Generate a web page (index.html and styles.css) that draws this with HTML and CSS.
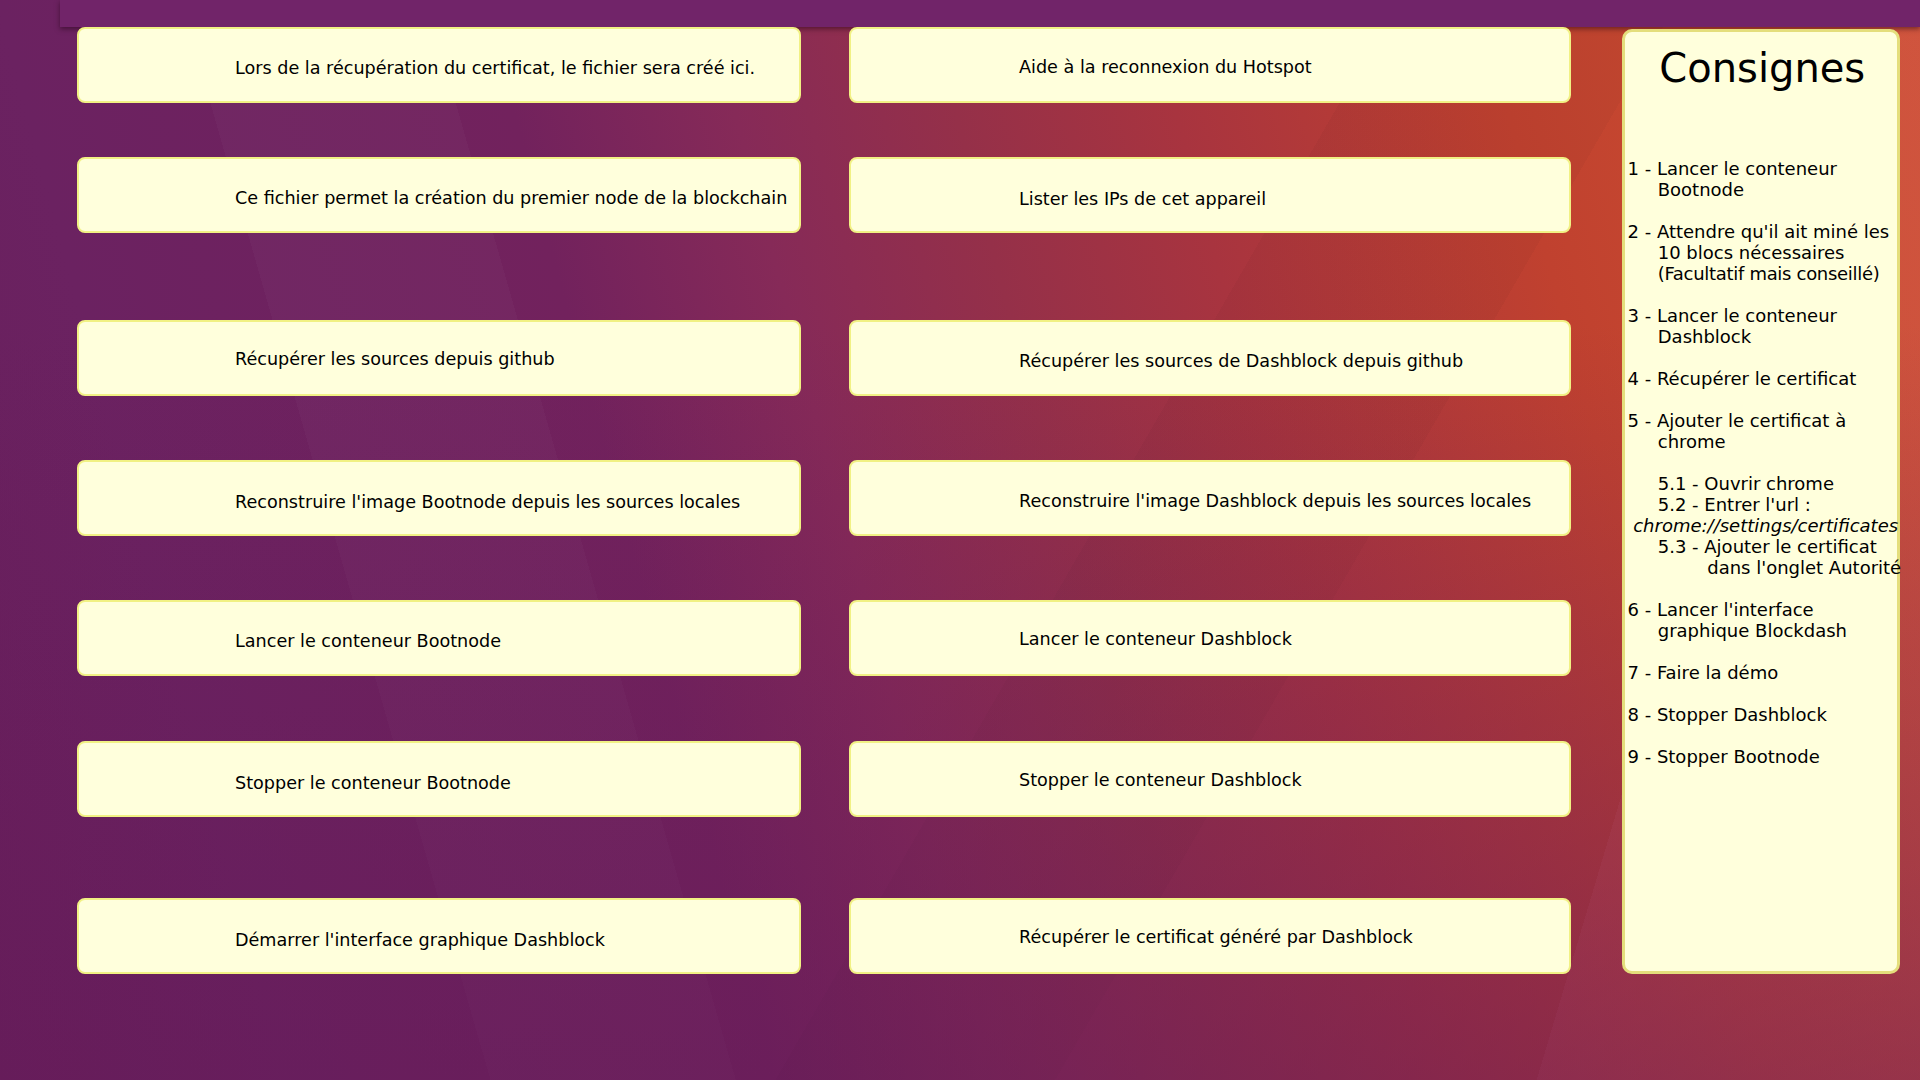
FILE: index.html
```html
<!DOCTYPE html>
<html lang="fr">
<head>
<meta charset="utf-8">
<title>Consignes</title>
<link rel="stylesheet" href="styles.css">
</head>
<body>
<div class="topbar"></div>
<main class="desk">
  <section class="board">
    <div class="row">
      <div class="card left">Lors de la récupération du certificat, le fichier sera créé ici.</div>
      <div class="card right up1">Aide à la reconnexion du Hotspot</div>
    </div>
    <div class="row">
      <div class="card left">Ce fichier permet la création du premier node de la blockchain</div>
      <div class="card right dn1">Lister les IPs de cet appareil</div>
    </div>
    <div class="row">
      <div class="card left up2">Récupérer les sources depuis github</div>
      <div class="card right">Récupérer les sources de Dashblock depuis github</div>
    </div>
    <div class="row">
      <div class="card left dn1">Reconstruire l'image Bootnode depuis les sources locales</div>
      <div class="card right">Reconstruire l'image Dashblock depuis les sources locales</div>
    </div>
    <div class="row">
      <div class="card left">Lancer le conteneur Bootnode</div>
      <div class="card right up2">Lancer le conteneur Dashblock</div>
    </div>
    <div class="row">
      <div class="card left dn1">Stopper le conteneur Bootnode</div>
      <div class="card right up2">Stopper le conteneur Dashblock</div>
    </div>
    <div class="row">
      <div class="card left dn1">Démarrer l'interface graphique Dashblock</div>
      <div class="card right up2">Récupérer le certificat généré par Dashblock</div>
    </div>
  </section>
  <aside class="consignes">
    <h1 class="title">Consignes</h1>
    <div class="steps">
      <p class="step">1 - Lancer le conteneur<br>Bootnode</p>
      <p class="step">2 - Attendre qu'il ait miné les<br>10 blocs nécessaires<br><span class="tight">(Facultatif mais conseillé)</span></p>
      <p class="step">3 - Lancer le conteneur<br>Dashblock</p>
      <p class="step">4 - Récupérer le certificat</p>
      <p class="step">5 - Ajouter le certificat à<br>chrome</p>
      <div class="substeps">
        <p class="sub">5.1 - Ouvrir chrome</p>
        <p class="sub">5.2 - Entrer l'url :</p>
        <p class="url">chrome://settings/certificates</p>
        <p class="sub">5.3 - Ajouter le certificat<br>dans l'onglet Autorité</p>
      </div>
      <p class="step">6 - Lancer l'interface<br>graphique Blockdash</p>
      <p class="step">7 - Faire la démo</p>
      <p class="step">8 - Stopper Dashblock</p>
      <p class="step">9 - Stopper Bootnode</p>
    </div>
  </aside>
</main>
</body>
</html>
```

FILE: styles.css
```css
html, body {
  margin: 0;
  padding: 0;
}

body {
  width: 1920px;
  height: 1080px;
  overflow: hidden;
  font-family: "DejaVu Sans", "Noto Sans", sans-serif;
  color: #000;
  background:
    linear-gradient(to bottom, rgba(95, 25, 85, 0) 30%, rgba(100, 26, 88, 0.5) 100%),
    linear-gradient(106.6deg, rgba(255, 150, 190, 0) 82.9%, rgba(255, 150, 190, 0.08) 82.9%),
    linear-gradient(74deg, rgba(255, 255, 255, 0) 22%, rgba(255, 255, 255, 0.025) 22%, rgba(255, 255, 255, 0.025) 33%, rgba(255, 255, 255, 0) 33%),
    linear-gradient(120deg, rgba(0, 0, 0, 0) 55%, rgba(0, 0, 0, 0.03) 55%, rgba(0, 0, 0, 0.03) 66%, rgba(0, 0, 0, 0) 66%),
    linear-gradient(75deg, #681f5c 0%, #6b2261 13%, #72225d 35%, #862a58 45%, #953049 55%, #a8343f 65%, #c0412f 80%, #c84a30 90%, #cc4f33 100%);
}

.topbar {
  height: 27px;
  margin-left: 60px;
  background: #712469;
  box-shadow: 0 2px 5px rgba(30, 0, 15, 0.5);
}

.desk {
  display: flex;
  align-items: flex-start;
  padding-left: 77px;
}

.board {
  display: flex;
  flex-direction: column;
  width: 1494px;
}

.row {
  display: flex;
  gap: 48px;
}

.row:nth-child(2) { margin-top: 54px; }
.row:nth-child(3) { margin-top: 87px; }
.row:nth-child(4) { margin-top: 64px; }
.row:nth-child(5) { margin-top: 64px; }
.row:nth-child(6) { margin-top: 65px; }
.row:nth-child(7) { margin-top: 81px; }

.card {
  box-sizing: border-box;
  height: 76px;
  border: 2px solid #f1f184;
  border-radius: 8px;
  background: #ffffdc;
  font-size: 17.6px;
  line-height: normal;
  padding-top: 29px;
  white-space: nowrap;
}

.card.left {
  width: 724px;
  padding-left: 156px;
}

.card.right {
  width: 722px;
  padding-left: 168px;
}

.card.up1 { padding-top: 28px; }
.card.up2 { padding-top: 27px; }
.card.dn1 { padding-top: 30px; }

.consignes {
  box-sizing: border-box;
  width: 278px;
  height: 945px;
  margin-left: 51px;
  margin-top: 1.5px;
  border: 3px solid #e4de7c;
  border-radius: 10px;
  background: #ffffdc;
  padding: 13px 0 0 2.5px;
}

.title {
  margin: 0;
  font-size: 40px;
  font-weight: normal;
  line-height: normal;
  text-align: center;
}

.steps {
  margin-top: 67px;
  font-size: 18px;
  line-height: 21px;
  white-space: nowrap;
}

.step {
  margin: 0 0 21px;
  padding-left: 1.68em;
  text-indent: -1.68em;
}

.tight {
  letter-spacing: -0.3px;
}

.substeps {
  margin: 0 0 21px;
}

.sub {
  margin: 0 0 0 1.68em;
  padding-left: 2.75em;
  text-indent: -2.75em;
}

.url {
  margin: 0 0 0 0.318em;
  font-style: italic;
}
```
